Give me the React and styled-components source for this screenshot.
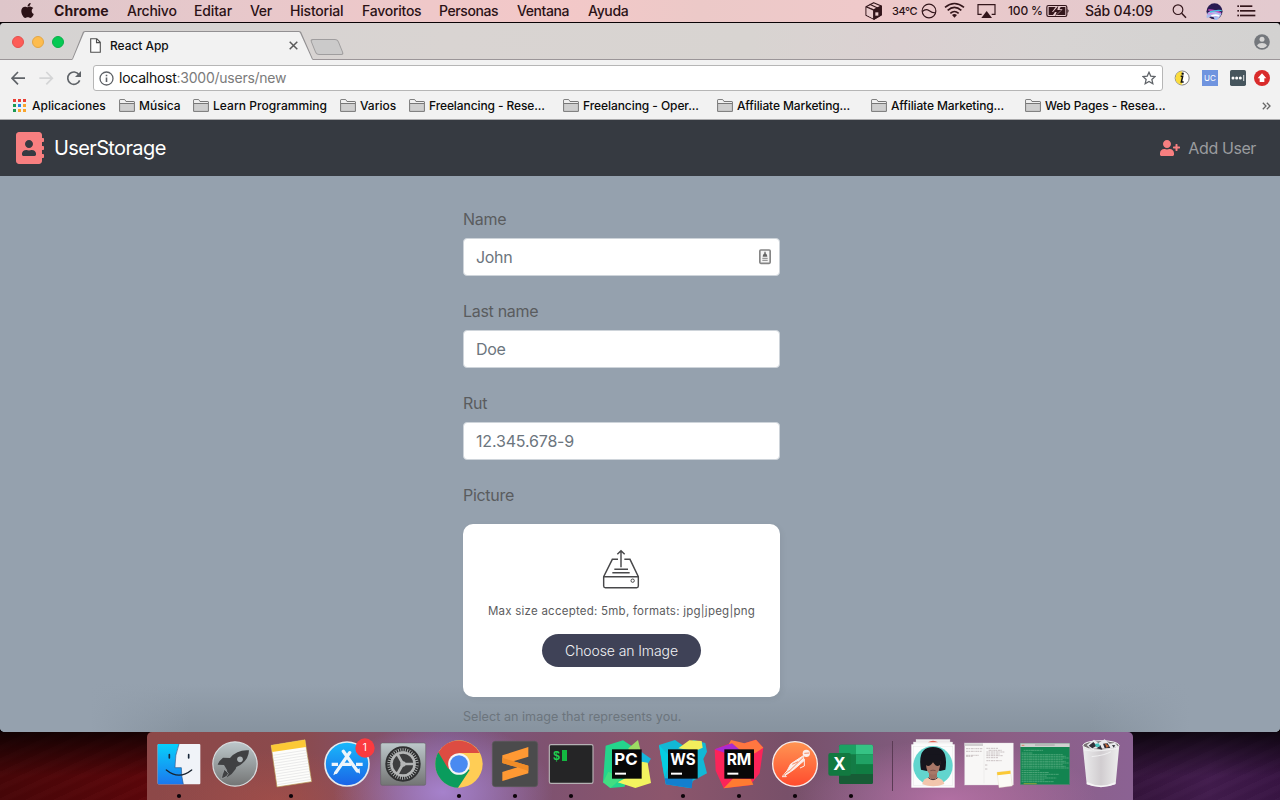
import React from "react";
import styled, { createGlobalStyle } from "styled-components";
import { FaAddressBook, FaUserPlus, FaApple } from "react-icons/fa";

const Global = createGlobalStyle`
  * { box-sizing: border-box; }
  html, body { margin: 0; padding: 0; background: #0a0205; overflow: hidden; }
  body { font-family: Inter, "Noto Sans", "Liberation Sans", sans-serif; }
  svg { display: block; flex: none; }
`;

const Screen = styled.div`
  width: 1280px;
  height: 800px;
  display: flex;
  flex-direction: column;
  background: #0a0205;
  overflow: hidden;
`;

/* ---------- menu bar ---------- */
const MenuBar = styled.header`
  height: 22px;
  flex: none;
  display: flex;
  align-items: center;
  padding-left: 19px;
  color: #2b1216;
  background: linear-gradient(90deg, #dec6ca 0, #e6c8cb 200px, #efc8c9 430px, #f3c8c8 560px, #ecc9c8 700px, #efc9ca 860px, #e6c9cc 1050px, #e3cacf 1280px);
`;
const AppleMark = styled.div`
  width: 35px;
  display: flex;
  padding-bottom: 2px;
`;
const MenuItem = styled.span`
  width: ${(p) => p.$w}px;
  flex: none;
  font-size: 14px;
  line-height: 22px;
  white-space: nowrap;
  font-weight: ${(p) => (p.$bold ? 700 : 450)};
  letter-spacing: ${(p) => p.$ls || 0}px;
`;
const Status = styled.div`
  display: flex;
  align-items: center;
  margin-left: auto;
  height: 22px;
`;
const StatusCell = styled.div`
  width: ${(p) => p.$w}px;
  flex: none;
  white-space: nowrap;
  font-size: ${(p) => p.$size || 12}px;
  letter-spacing: ${(p) => p.$ls || 0}px;
  line-height: 22px;
  font-weight: 450;
`;

/* ---------- browser window ---------- */
const Window = styled.main`
  height: 709px;
  margin-top: 1px;
  flex: none;
  display: flex;
  flex-direction: column;
  border-radius: 4px 4px 5px 5px;
  overflow: hidden;
  background: #95a1ae;
`;
const TabStrip = styled.div`
  height: 37px;
  flex: none;
  display: flex;
  align-items: flex-end;
  padding: 0 10px 0 12px;
  border-bottom: 1px solid #9b9598;
  background: linear-gradient(90deg, #d5d3d2 0, #d9d4d2 450px, #d8d4d1 750px, #dbd1d2 900px, #d7d4d3 1060px, #d3d2d1 1280px);
`;
const Lights = styled.div`
  display: flex;
  gap: 8px;
  align-self: center;
  width: 59px;
  padding-top: 2px;
`;
const Light = styled.i`
  width: 12px;
  height: 12px;
  flex: none;
  border-radius: 50%;
  background: ${(p) => p.$c};
  border: 1px solid ${(p) => p.$b};
`;
const Tab = styled.div`
  position: relative;
  width: 243px;
  height: 29px;
  margin-bottom: -1px;
  display: flex;
  align-items: center;
  padding: 0 16px 0 19px;
  font-size: 12px;
  color: #111;
  background: #929092;
  clip-path: polygon(0 100%, 1px 97%, 12px 3%, 14px 0, 228px 0, 230px 3%, 242px 97%, 100% 100%);
  &::before {
    content: "";
    position: absolute;
    inset: 1px 1px 0 1px;
    background: #f2f2f2;
    clip-path: polygon(0 100%, 1px 96%, 12px 3%, 13px 0, 227px 0, 228px 3%, 240px 97%, 100% 100%);
  }
  & > * { position: relative; }
`;
const TabTitle = styled.span`
  margin-left: 9px;
  flex: 1;
  letter-spacing: -0.05px;
  font-weight: 450;
`;
const NewTab = styled.i`
  width: 28px;
  height: 16px;
  margin: 0 0 4px -1px;
  background: #cbcaca;
  border: 1px solid #9f9d9e;
  border-radius: 3px;
  transform: skewX(22deg);
`;
const Profile = styled.div`
  margin-left: auto;
  align-self: center;
  padding-top: 2px;
`;
const Toolbar = styled.div`
  height: 36px;
  flex: none;
  display: flex;
  align-items: center;
  padding-left: 8px;
  background: #f2f2f2;
`;
const NavButtons = styled.div`
  display: flex;
  width: 85px;
`;
const UrlBar = styled.div`
  width: 1070px;
  height: 26px;
  display: flex;
  align-items: center;
  padding: 0 6px 0 5px;
  background: #fff;
  border: 1px solid #b6b6b6;
  border-radius: 3px;
  font-size: 14px;
  color: #7b7b7b;
  letter-spacing: -0.25px;
`;
const UrlText = styled.span`
  margin-left: 5px;
  padding-bottom: 1px;
  flex: 1;
  b { font-weight: 400; color: #111; }
`;
const Extensions = styled.div`
  display: flex;
  align-items: center;
  margin-left: 11px;
`;
const Bookmarks = styled.div`
  height: 24px;
  flex: none;
  display: flex;
  align-items: center;
  padding: 0 9px 4px 13px;
  background: #f2f2f2;
  border-bottom: 1px solid #ababad;
`;
const Bookmark = styled.div`
  width: ${(p) => p.$w}px;
  flex: none;
  display: flex;
  align-items: center;
  gap: ${(p) => p.$gap || 4}px;
  font-size: 12px;
  line-height: 16px;
  font-weight: 450;
  color: #0c0c0c;
  white-space: nowrap;
  letter-spacing: ${(p) => p.$ls || 0}px;
`;
const More = styled.div`
  margin-left: auto;
`;

/* ---------- page ---------- */
const Navbar = styled.nav`
  height: 56px;
  flex: none;
  display: flex;
  align-items: center;
  justify-content: space-between;
  padding: 0 24px 0 16px;
  background: #363a41;
`;
const Brand = styled.div`
  display: flex;
  align-items: center;
  gap: 10px;
  color: #fff;
  font-size: 20px;
  letter-spacing: -0.62px;
  svg { color: #f87f80; width: 28px; height: 32px; }
`;
const AddUser = styled.div`
  display: flex;
  align-items: center;
  gap: 8px;
  color: #9a9c9f;
  font-size: 16px;
  letter-spacing: -0.4px;
  svg { color: #f87f80; }
`;
const Page = styled.section`
  flex: 1;
  display: flex;
  flex-direction: column;
  align-items: flex-start;
  padding: 31px 0 0 463px;
  background:
    linear-gradient(90deg, #95a1ae 90px, transparent 190px, transparent 1090px, #95a1ae 1190px) bottom / 100% 48px no-repeat,
    linear-gradient(180deg, #95a1ae, #87939f) bottom / 100% 48px no-repeat,
    #95a1ae;
`;
const Field = styled.div`
  width: 317px;
  height: 92px;
  flex: none;
`;
const Label = styled.label`
  display: block;
  height: 31px;
  line-height: 25px;
  font-size: 16px;
  color: #5a5c5e;
  letter-spacing: -0.3px;
`;
const Input = styled.div`
  height: 38px;
  display: flex;
  align-items: center;
  justify-content: space-between;
  padding: 0 8px 0 12px;
  border: 1px solid #ced4da;
  border-radius: 4px;
  background: #fff;
  color: #6c757d;
  font-size: 16px;
  letter-spacing: ${(p) => p.$ls || -0.35}px;
`;
const Card = styled.div`
  width: 317px;
  height: 173px;
  margin-top: 10px;
  flex: none;
  display: flex;
  flex-direction: column;
  align-items: center;
  padding-top: 25px;
  border-radius: 10px;
  background: #fff;
  box-shadow: 2px 2px 6px rgba(0, 0, 0, 0.05);
`;
const UploadMark = styled.div`
  padding-right: 2px;
`;
const Hint = styled.p`
  margin: 14px 0;
  line-height: 17px;
  font-size: 11.5px;
  letter-spacing: 0.24px;
  color: #5c5c5e;
  white-space: nowrap;
`;
const Choose = styled.button`
  width: 159px;
  height: 33px;
  padding: 0;
  border: 0;
  border-radius: 17px;
  background: #3f4257;
  color: #f2f2f5;
  font: 300 14px Inter, sans-serif;
  letter-spacing: -0.1px;
`;
const Help = styled.small`
  margin-top: 10px;
  font-size: 12.6px;
  line-height: 19px;
  color: #6c757d;
  letter-spacing: 0.03px;
`;

/* ---------- dock ---------- */
const Desktop = styled.footer`
  height: 68px;
  flex: none;
  display: flex;
  justify-content: center;
  background:
    linear-gradient(180deg, rgba(0, 0, 0, 0.75), rgba(0, 0, 0, 0) 65%),
    repeating-linear-gradient(155deg, rgba(255, 255, 255, 0.012) 0 4px, rgba(0, 0, 0, 0.03) 7px 12px),
    linear-gradient(90deg, #480608 0, #5d060a 150px, #35143c 1130px, #421c4d 1210px, #391544 1280px);
`;
const Dock = styled.div`
  width: 986px;
  display: flex;
  padding: 0 4px;
  border-radius: 5px 5px 0 0;
  background:
    radial-gradient(ellipse 110px 70px at 296px 60px, rgba(168, 132, 208, 0.95), rgba(168, 132, 208, 0)),
    radial-gradient(ellipse 150px 60px at 800px 68px, rgba(196, 120, 178, 0.7), rgba(196, 120, 178, 0)),
    radial-gradient(ellipse 120px 50px at 130px 68px, rgba(170, 80, 72, 0.6), rgba(170, 80, 72, 0)),
    linear-gradient(90deg, #8d4848 0, #8b4a4d 150px, #7c5680 300px, #7f5270 400px, #8c566c 520px, #785069 640px, #7c5878 720px, #8c5e84 850px, #8b6293 986px);
`;
const Separator = styled.div`
  width: 26px;
  display: flex;
  align-items: center;
  justify-content: center;
  &::before {
    content: "";
    width: 1px;
    height: 50px;
    background: #5b3b55;
  }
`;

const ink = "#33161b";

const AppIcon = ({ off, running, children }) => (
  <svg width="56" height="68" viewBox={`${off} 21 168 204`}>
    {children}
    {running && <circle cx={off + 84} cy="213" r="6.3" fill="#0c0309" />}
  </svg>
);

const IdeTile = ({ x, name, w }) => (
  <g>
    <rect x={x} y="73" width="89" height="88" fill="#080808" />
    <text x={x + 7} y="120" fontSize="49" fontFamily="Inter" fontWeight="700" fill="#fff" textLength={w} lengthAdjust="spacingAndGlyphs">{name}</text>
    <rect x={x + 9} y="143" width="33" height="6" fill="#fff" />
  </g>
);

const Folder = () => (
  <svg width="16" height="13" viewBox="0 0 16 13">
    <path d="M.6 12.4V1.1q0-.5.5-.5h4.600l1.300 1.900h7.900q.5 0 .5.5v9.400z" fill="#cfcfcf" stroke="#777" />
    <path d="M1.100 1.100h4.300l1.300 1.900h8.200v1H1.100z" fill="#f0f0f0" />
    <path d="M1 4.500h14" stroke="#777" />
  </svg>
);

const AppsGrid = () => (
  <svg width="13" height="13" viewBox="0 0 13 13">
    {["#ea3f36", "#ea3f36", "#ea3f36", "#1c9a55", "#2385ea", "#f9a52d", "#1c9a55", "#f9a52d", "#f9a52d"].map((c, i) => (
      <rect key={i} x={(i % 3) * 5} y={Math.floor(i / 3) * 5} width="3" height="3" fill={c} />
    ))}
  </svg>
);

const menus = [
  ["Chrome", 73, true, 0.1],
  ["Archivo", 67, false, -0.25],
  ["Editar", 56, false, -0.15],
  ["Ver", 40, false, -0.3],
  ["Historial", 72, false, -0.2],
  ["Favoritos", 77, false, -0.25],
  ["Personas", 78, false, -0.4],
  ["Ventana", 71, false, -0.4],
  ["Ayuda", 60, false, -0.35],
];

const folders = [
  ["Música", 74, 0],
  ["Learn Programming", 147, 0.05],
  ["Varios", 69, 0],
  ["Freelancing - Rese...", 154, -0.1],
  ["Freelancing - Oper...", 154, -0.07],
  ["Affiliate Marketing...", 154, -0.13],
  ["Affiliate Marketing...", 154, -0.13],
  ["Web Pages - Resea...", 160, -0.1],
];

function MenuBarView() {
  return (
    <MenuBar>
      <AppleMark><FaApple size={17} color="#2b1216" /></AppleMark>
      {menus.map(([t, w, b, ls]) => <MenuItem key={t} $w={w} $bold={b} $ls={ls}>{t}</MenuItem>)}
      <Status>
        <StatusCell $w={27}>
          <svg width="17" height="18" viewBox="46 5 51 54">
            <path d="M72 7 95 17V44L73 57 49 45V19z" fill="none" stroke={ink} strokeWidth="3.500" strokeLinejoin="round" />
            <path d="M49 19 72 28 95 17V44L73 57V28" fill={ink} stroke={ink} strokeWidth="2" />
            <path d="M51 20 72 28V55L51 44z" fill="#e9cbcd" />
            <path d="M49 19 72 29 95 17M72 29V57M60 12 84 23" fill="none" stroke={ink} strokeWidth="3.500" />
            <rect x="77" y="36" width="9" height="10" fill="#e9cbcd" />
          </svg>
        </StatusCell>
        <StatusCell $w={29} $size={11} $ls={-0.4}>34°C</StatusCell>
        <StatusCell $w={23}>
          <svg width="16" height="16" viewBox="214 9 48 48">
            <circle cx="238" cy="33" r="20.500" fill="none" stroke={ink} strokeWidth="3.500" />
            <path d="M218 35C225 27 232 27 239 32S251 39 258 38" fill="none" stroke={ink} strokeWidth="3.500" />
          </svg>
        </StatusCell>
        <StatusCell $w={33}>
          <svg width="21" height="18" viewBox="285 7 63 54">
            <g fill="none" stroke={ink} strokeWidth="5">
              <path d="M288 23Q316 0 345 23" />
              <path d="M296 32Q316 14 337 32" />
              <path d="M304 41Q316 30 329 41" />
            </g>
            <path d="M309 46Q316 40 324 46L316.500 54z" fill={ink} />
          </svg>
        </StatusCell>
        <StatusCell $w={31}>
          <svg width="19" height="17" viewBox="382 8 57 51">
            <path d="M396 42H385V13H436V42H426" fill="none" stroke={ink} strokeWidth="3.500" />
            <path d="M411 32 427 53H395z" fill={ink} />
          </svg>
        </StatusCell>
        <StatusCell $w={38} $size={12} $ls={-0.15}>100 %</StatusCell>
        <StatusCell $w={39}>
          <svg width="24" height="14" viewBox="590 13 72 42">
            <rect x="592.500" y="17.500" width="60" height="33" rx="5" fill="none" stroke={ink} strokeWidth="3.500" />
            <path d="M598 22H619L608 37H617L611 46H598zM634 22H648V46H622L640 29H630z" fill={ink} />
            <path d="M627 18 611 37H622L617 50 636 31H624z" fill={ink} />
            <path d="M655 29Q660 33 655 39z" fill={ink} stroke={ink} />
          </svg>
        </StatusCell>
        <StatusCell $w={87} $size={14} $ls={-0.2}>Sáb 04:09</StatusCell>
        <StatusCell $w={34}>
          <svg width="16" height="17" viewBox="970 10 48 51">
            <circle cx="988" cy="30" r="14.500" fill="none" stroke={ink} strokeWidth="3.500" />
            <path d="M999 41 1012 54" stroke={ink} strokeWidth="4.500" />
          </svg>
        </StatusCell>
        <StatusCell $w={31}>
          <svg width="17" height="17" viewBox="1072 8 51 51">
            <circle cx="1097.500" cy="33" r="24" fill="#291b52" />
            <path d="M1077 37Q1088 28 1102 31T1118 38 1110 54 1097 55 1081 51 1077 37z" fill="#a9bdee" />
            <path d="M1079 29Q1095 28 1117 38" fill="none" stroke="#c94bc0" strokeWidth="4" />
            <path d="M1078 42Q1092 34 1104 49" fill="none" stroke="#d78be0" strokeWidth="4" />
            <path d="M1084 35Q1104 28 1119 31" stroke="#43c2dd" strokeWidth="4" fill="none" />
            <path d="M1088 47Q1100 42 1112 47" stroke="#fff" strokeWidth="5" fill="none" />
          </svg>
        </StatusCell>
        <StatusCell $w={43}>
          <svg width="19" height="14" viewBox="1166 12 57 42">
            <g fill={ink}>
              <rect x="1167" y="16" width="5" height="5" /><rect x="1175" y="16" width="37" height="5" />
              <rect x="1167" y="30" width="5" height="5" /><rect x="1175" y="30" width="46" height="5" />
              <rect x="1167" y="44" width="5" height="5" /><rect x="1175" y="44" width="46" height="5" />
            </g>
          </svg>
        </StatusCell>
      </Status>
    </MenuBar>
  );
}

function BrowserChrome() {
  return (
    <>
      <TabStrip>
        <Lights>
          <Light $c="#fd5c57" $b="#e5504d" />
          <Light $c="#fdbc4e" $b="#e3a644" />
          <Light $c="#05c953" $b="#0ab04a" />
        </Lights>
        <Tab>
          <svg width="11" height="15" viewBox="0 0 11 15">
            <path d="M.7.7H6.800L10.300 4.300V14.300H.7zM6.500.7V4.600H10.300" fill="#fdfdfd" stroke="#4e4e4e" strokeWidth="1.100" />
          </svg>
          <TabTitle>React App</TabTitle>
          <svg width="9" height="9" viewBox="0 0 9 9"><path d="M.7.7 8.300 8.300M8.300.7.700 8.300" stroke="#5a5a5a" strokeWidth="1.500" /></svg>
        </Tab>
        <NewTab />
        <Profile>
          <svg width="16" height="16" viewBox="0 0 16 16">
            <circle cx="8" cy="8" r="7.800" fill="#74777c" />
            <circle cx="8" cy="5.300" r="2.500" fill="#d6d5d4" />
            <path d="M3 11.200Q4.500 9 8 9T13 11.200Q11.500 14 8 14T3 11.200z" fill="#d6d5d4" />
          </svg>
        </Profile>
      </TabStrip>
      <Toolbar>
        <NavButtons>
          <svg width="84" height="18" viewBox="24 207 252 54">
            <path d="M75 234.500H37M54 216 36 234.500 54 253" fill="none" stroke="#5f6368" strokeWidth="5" />
            <path d="M118 234.500H156M139 216 157 234.500 139 253" fill="none" stroke="#d4d5d6" strokeWidth="5" />
            <path d="M237 224A18.500 18.500 0 1 0 239 241" fill="none" stroke="#5f6368" strokeWidth="5" />
            <path d="M243 213V231H225z" fill="#5f6368" />
          </svg>
        </NavButtons>
        <UrlBar>
          <svg width="15" height="15" viewBox="0 0 15 15">
            <circle cx="7.500" cy="7.500" r="6.500" fill="none" stroke="#5f6368" strokeWidth="1.300" />
            <path d="M7.500 6.600V11M7.500 3.800V5.300" stroke="#5f6368" strokeWidth="1.600" />
          </svg>
          <UrlText><b>localhost</b>:3000/users/new</UrlText>
          <svg width="14" height="14" viewBox="875 213 44 44">
            <path d="M897 217 902.500 229 916 230.500 906 239.500 909 253 897 246 885 253 888 239.500 878 230.500 891.500 229z" fill="none" stroke="#5f6368" strokeWidth="4" />
          </svg>
        </UrlBar>
        <Extensions>
          <svg width="98" height="18" viewBox="972 207 294 54">
            <circle cx="996.500" cy="234" r="21" fill="#fff" stroke="#666" strokeWidth="2.500" />
            <path d="M996.500 213.500A20.500 20.500 0 0 0 996.500 254.500z" fill="#fbdc3c" />
            <path d="M992 229H998L994 246H1001" fill="none" stroke="#111" strokeWidth="4.500" />
            <circle cx="998" cy="221" r="3.500" fill="#111" />
            <rect x="1056" y="210" width="48" height="48" fill="#6f94df" />
            <text x="1080" y="243" fontSize="24" fontFamily="Inter" textAnchor="middle" fill="#fff">UC</text>
            <rect x="1140" y="210" width="48" height="48" rx="5" fill="#46555d" />
            <g fill="#fff">
              <circle cx="1149" cy="234" r="4.500" /><circle cx="1160" cy="234" r="4.500" /><circle cx="1171" cy="234" r="4.500" />
              <rect x="1180" y="225" width="2.500" height="18" />
            </g>
            <circle cx="1236" cy="234" r="24" fill="#d92b2b" />
            <path d="M1236 220 1249 235H1243V246H1229V235H1223z" fill="#fff" />
          </svg>
        </Extensions>
      </Toolbar>
      <Bookmarks>
        <Bookmark $w={106} $gap={6}><AppsGrid />Aplicaciones</Bookmark>
        {folders.map(([t, w, ls], i) => <Bookmark key={i} $w={w} $ls={ls}><Folder />{t}</Bookmark>)}
        <More>
          <svg width="9" height="8" viewBox="0 0 9 8"><path d="M.8.8 4 4 .8 7.200M4.800.8 8 4 4.800 7.200" fill="none" stroke="#666" strokeWidth="1.300" /></svg>
        </More>
      </Bookmarks>
    </>
  );
}

function UserForm() {
  return (
    <Page>
      <Field><Label>Name</Label>
        <Input>John
          <svg width="12" height="16" viewBox="957 148 36 48">
            <rect x="959.500" y="151" width="31" height="40" rx="3" fill="#f4f4f4" stroke="#858585" strokeWidth="5" />
            <path d="M975 156V163" stroke="#888" strokeWidth="5" />
            <path d="M968 171Q969 161 975 161T982 171z" fill="#666" />
            <path d="M967 176H983M967 182H983" stroke="#999" strokeWidth="4" />
          </svg>
        </Input>
      </Field>
      <Field><Label>Last name</Label><Input>Doe</Input></Field>
      <Field><Label>Rut</Label><Input $ls={-0.17}>12.345.678-9</Input></Field>
      <Label>Picture</Label>
      <Card>
        <UploadMark>
          <svg width="38" height="40" viewBox="486 206 114 120">
            <g fill="none" stroke="#48484a" strokeWidth="4.300">
              <path d="M543 261V213M532 222 543 211 554 222" />
              <path d="M534 237H517L491 289V317Q491 322 496 322H590Q595 322 595 317V289L570 237H553" />
              <path d="M491 289H595M523 267H564M517 277H569" />
              <circle cx="578" cy="301" r="5" strokeWidth="3" />
            </g>
          </svg>
        </UploadMark>
        <Hint>Max size accepted: 5mb, formats: jpg|jpeg|png</Hint>
        <Choose>Choose an Image</Choose>
      </Card>
      <Help>Select an image that represents you.</Help>
    </Page>
  );
}

const lines = (n, f) => Array.from({ length: n }, (_, i) => f(i));

function DockView() {
  return (
    <Desktop>
      <Dock>
        <AppIcon off={33} running>
          <defs>
            <linearGradient id="fb" x2="0" y2="1"><stop stopColor="#07d0fb" /><stop offset="1" stopColor="#1b77ee" /></linearGradient>
            <linearGradient id="grey" x2="0" y2="1"><stop stopColor="#bdc8cb" /><stop offset="1" stopColor="#737474" /></linearGradient>
            <linearGradient id="as" x2="0" y2="1"><stop stopColor="#18b9fb" /><stop offset="1" stopColor="#1b62e6" /></linearGradient>
            <linearGradient id="pm" x2="0" y2="1"><stop stopColor="#ff9553" /><stop offset="1" stopColor="#ff4b2e" /></linearGradient>
            <linearGradient id="bin" x2="1" y2="0"><stop stopColor="#ececed" /><stop offset=".5" stopColor="#d1cdd0" /><stop offset="1" stopColor="#eeeeee" /></linearGradient>
          </defs>
          <rect x="53" y="57" width="128" height="121" rx="3" fill="#f0f3f8" />
          <path d="M56 57H117Q104 90 105 128H124Q124 155 130 178H56Q53 178 53 175V60Q53 57 56 57z" fill="url(#fb)" />
          <path d="M117 57Q104 90 105 128H124Q124 155 130 178" fill="none" stroke="#27568c" strokeWidth="2" />
          <path d="M88 89V99M146 89V99" stroke="#17273a" strokeWidth="5" strokeLinecap="round" />
          <path d="M79 135Q117 166 155 135" fill="none" stroke="#17222e" strokeWidth="4" strokeLinecap="round" />
        </AppIcon>
        <AppIcon off={201}>
          <circle cx="285" cy="117" r="66.500" fill="url(#grey)" stroke="#d8dcde" strokeWidth="3.500" />
          <path d="M327 76Q292 73 270 99L249 98Q238 106 233 119L252 120 261 135Q263 144 261 157 278 147 287 132L289 126Q326 110 327 76z" fill="#404143" />
          <circle cx="300" cy="103" r="8.500" fill="#aeb5b8" />
          <path d="M253 133 265 145Q262 157 244 161 246 150 253 133z" fill="#404143" stroke="#a3a8aa" strokeWidth="2" />
        </AppIcon>
        <AppIcon off={369} running>
          <path d="M393 61 495 44 515 170 411 186z" fill="#fdfdfb" stroke="#b3924d" strokeWidth="2" />
          <path d="M393 61 495 44 498 66 397 81z" fill="#fcc936" />
          {lines(12, (i) => <path key={i} d={`M${399 + i * 1.2} ${91 + i * 8} ${500 + i * 1.2} ${75 + i * 8}`} stroke="#d7d7d9" strokeWidth="1.500" />)}
        </AppIcon>
        <AppIcon off={537}>
          <circle cx="621" cy="117" r="66" fill="url(#as)" stroke="#e6eaee" strokeWidth="5" />
          <g stroke="#eef5fb" strokeWidth="10" strokeLinecap="round">
            <path d="M629 83 588 142M610 79 652 138" />
            <path d="M575 118H594M604 118H634M648 118H668" strokeLinecap="butt" />
          </g>
          <path d="M583 140 580 151 591 145zM647 137 660 146 659 130z" fill="#eef5fb" />
          <circle cx="675" cy="69" r="29" fill="#fb3b3f" />
          <text x="674" y="79" fontSize="30" fontFamily="Inter" textAnchor="middle" fill="#fff">1</text>
        </AppIcon>
        <AppIcon off={705}>
          <rect x="722" y="54" width="135" height="127" rx="5" fill="url(#grey)" stroke="#5f6060" strokeWidth="1.500" />
          <circle cx="789" cy="117" r="50" fill="#aeb1b1" stroke="#303132" strokeWidth="6" />
          <circle cx="789" cy="117" r="43" fill="none" stroke="#262728" strokeWidth="9" strokeDasharray="4 3" />
          <circle cx="789" cy="117" r="34" fill="#3d3e3f" stroke="#b4b6b6" strokeWidth="6" />
          <path d="M789 117H823M789 117 772 87M789 117 772 147" stroke="#b4b6b6" strokeWidth="8" />
          <circle cx="789" cy="117" r="8" fill="#b4b6b6" />
        </AppIcon>
        <AppIcon off={3} running>
          <circle cx="87" cy="117" r="71" fill="#ffcd55" />
          <path d="M87 117 25 82A71 71 0 0 0 84 188L119 135z" fill="#0a9c5d" />
          <path d="M25 82A71 71 0 0 1 149 84H87L55 132z" fill="#dd4c42" />
          <circle cx="87" cy="117" r="32.500" fill="#f4f5f5" />
          <circle cx="87" cy="117" r="26.500" fill="#4a8af1" />
        </AppIcon>
        <AppIcon off={171} running>
          <rect x="187" y="49" width="136" height="136" rx="9" fill="#4b4b4c" stroke="#5b5a5b" strokeWidth="2" />
          <path d="M217 91 295 66V95L250 109 295 122V145L217 168V141L262 127 217 114z" fill="#ff9933" />
          <path d="M250 109 217 98V114L262 127 295 138V122z" fill="#f08c27" />
        </AppIcon>
        <AppIcon off={339} running>
          <rect x="358" y="59" width="131" height="116" rx="5" fill="#252526" stroke="#b6b2b4" strokeWidth="3.500" />
          <text x="369" y="105" fontSize="36" fontFamily="Liberation Mono" fontWeight="700" fill="#1fd350">$</text>
          <rect x="396" y="75" width="15" height="33" fill="#13b841" />
        </AppIcon>
        <AppIcon off={507}>
          <path d="M527 62 579 46 606 64 584 185 541 189 519 172z" fill="#24d58c" />
          <path d="M595 70 624 45 632 78 600 83z" fill="#9cde63" />
          <path d="M623 73 663 101 645 130 620 115z" fill="#13b6dc" />
          <path d="M563 172 594 155 635 110 653 113 663 174 616 189z" fill="#f2f45f" />
          <path d="M519 172 541 189 575 160 535 140z" fill="#41dd82" />
          <IdeTile x={546} name="PC" w={70} />
        </AppIcon>
        <AppIcon off={675} running>
          <path d="M687 60 735 45 760 62 791 45 826 54 831 80 820 102 831 145 788 168 783 190 707 178z" fill="#12b8d5" />
          <path d="M745 70 778 46 815 48 818 68 795 78z" fill="#f2ee5c" />
          <path d="M704 160 788 160 785 190 708 178z" fill="#137fce" />
          <path d="M687 60 725 100 703 155z" fill="#05cde1" />
          <IdeTile x={714} name="WS" w={76} />
        </AppIcon>
        <AppIcon off={3} running>
          <path d="M14 73 57 56 104 55 138 44 160 68 149 145 120 181 41 190 17 137z" fill="#fb2459" />
          <path d="M57 56 63 45 103 55 138 44 160 68 135 85 77 76z" fill="#ff7740" />
          <path d="M14 73 66 55 91 76 43 83z" fill="#a92bd1" />
          <path d="M41 190 70 160 122 162 130 179z" fill="#ff7b32" />
          <IdeTile x={43} name="RM" w={74} />
        </AppIcon>
        <AppIcon off={171} running>
          <circle cx="255" cy="117" r="67" fill="url(#pm)" stroke="#f7eeee" strokeWidth="4" />
          <circle cx="289" cy="85" r="11" fill="#fbeeea" />
          <path d="M280 92 242 117 231 138 218 151 229 149 252 133 282 107z" fill="#fbeeea" stroke="#fbeeea" strokeWidth="3" />
          <path d="M280 97 237 139M264 110 247 118M218 151 238 137M283 85 298 84" stroke="#f57446" strokeWidth="2.500" fill="none" />
          <path d="M283 102V123L270 129M216 155H229L225 150" stroke="#fbeeea" strokeWidth="3" fill="none" />
        </AppIcon>
        <AppIcon off={339} running>
          <rect x="387" y="59" width="102" height="118" rx="5" fill="#137b45" />
          <path d="M392 59H438V88H387V64Q387 59 392 59z" fill="#1ca163" />
          <path d="M438 59H484Q489 59 489 64V88H438z" fill="#35c384" />
          <rect x="438" y="88" width="51" height="30" fill="#20a265" />
          <path d="M387 147H489V172Q489 177 484 177H392Q387 177 387 172z" fill="#175c36" />
          <rect x="438" y="118" width="51" height="29" fill="#107c42" />
          <rect x="355" y="84" width="68" height="68" rx="6" fill="#127940" />
          <text x="388" y="136" fontSize="50" fontFamily="Inter" fontWeight="700" fill="#fff" textAnchor="middle">X</text>
        </AppIcon>
        <Separator />
        <AppIcon off={585}>
          <rect x="618" y="43" width="102" height="20" fill="#f0eff0" stroke="#d3cbd0" />
          <rect x="610" y="51" width="118" height="20" fill="#f5f5f5" stroke="#d3cbd0" />
          <path d="M654 52Q669 43 684 52z" fill="#e36354" />
          <rect x="604" y="58" width="130" height="130" fill="#fcfcfc" />
          <rect x="609.500" y="63.500" width="119" height="118" fill="none" stroke="#dcdcdc" />
          <circle cx="669" cy="122" r="59" fill="#62d5ce" />
          <path d="M637 178Q639 159 657 158H682Q699 160 703 177 671 190 637 178z" fill="#f2c6ac" />
          <path d="M657 139H681V157L669 166 657 157z" fill="#9d6e60" />
          <path d="M633 134Q621 66 669 66T706 134L690 138 669 130 650 138z" fill="#16151d" />
          <path d="M649 106H690Q692 133 681 145 669 153 657 145 646 133 649 106z" fill="#a87767" />
          <path d="M643 91Q669 84 695 91V108H643z" fill="#16151d" />
          <path d="M648 108H690V120Q680 127 673 117L669 112 665 117Q656 127 648 120z" fill="#17161b" />
          <path d="M661 137Q669 134 677 137" stroke="#653e3c" strokeWidth="2" fill="none" />
          <path d="M655 158Q669 170 683 158" stroke="#493338" strokeWidth="3" fill="none" />
        </AppIcon>
        <AppIcon off={-57}>
          <rect x="-46" y="54" width="146" height="126" fill="#f8f7f6" stroke="#dcd5da" />
          <rect x="-46" y="55" width="55" height="8" fill="#d0cecf" />
          <path d="M12 63V175" stroke="#ddd" />
          <g stroke="#b4a9aa" strokeWidth="2" strokeDasharray="7 1 4 2">
            <path d="M-42 71H7M-42 79H5M-42 91H-4M-42 94H-22M19 70H54M26 76H65M19 81H74M19 87H61M19 92H68M19 98H55M19 107H65M15 120H22M15 132H22" />
          </g>
          <path d="M51 142 91 137 97 183 57 188z" fill="#fbfaf5" stroke="#d3ccb5" />
          <path d="M51 142 91 137 92 146 52 151z" fill="#fbc935" />
        </AppIcon>
        <AppIcon off={111}>
          <rect x="121" y="55" width="148" height="124" fill="#138450" stroke="#7a8c84" />
          <rect x="121" y="55" width="148" height="11" fill="#cfd0cf" />
          <path d="M125 61H133" stroke="#d68568" strokeWidth="3" />
          <path d="M165 60H224" stroke="#898b8a" strokeWidth="2" />
          <g stroke="#65b389" strokeWidth="2" strokeDasharray="5 1 9 1">
            <path d="M131 76H189M125 84H158" />
            {lines(9, (i) => <path key={i} d={`M125 ${89 + i * 5}H${248 + (i % 3) * 9}`} />)}
            {lines(7, (i) => <path key={i} d={`M125 ${137 + i * 5.5}H${178 + (i * 29) % 65}`} />)}
          </g>
          <path d="M131 176H170" stroke="#c8b72f" strokeWidth="2" />
        </AppIcon>
        <AppIcon off={279}>
          <path d="M308 60Q363 43 418 60L407 177Q363 195 320 177z" fill="url(#bin)" />
          <ellipse cx="363" cy="61" rx="54" ry="14" fill="#777073" stroke="#f5f5f5" strokeWidth="3" />
          <path d="M320 60 342 44 355 54 374 43 389 56 405 53 415 65 387 73 361 70 333 72z" fill="#e9e9ec" />
          <path d="M326 62 340 51 350 62 337 70zM369 56 383 55 391 69 374 70zM396 60 406 61 401 68zM350 70 361 60 367 74z" fill="#313039" />
          <path d="M344 57 356 55 361 64 349 67z" fill="#45c3bd" />
          <path d="M374 54 387 63 380 69z" fill="#c66a3a" />
          <path d="M312 75Q340 80 360 77T414 70M335 95Q375 91 393 80" fill="none" stroke="#f3f3f4" strokeWidth="2.500" />
          <path d="M321 171Q363 192 406 171L406 178Q363 195 320 178z" fill="#f5f4f5" />
        </AppIcon>
      </Dock>
    </Desktop>
  );
}

export default function App() {
  return (
    <Screen>
      <Global />
      <MenuBarView />
      <Window>
        <BrowserChrome />
        <Navbar>
          <Brand><FaAddressBook />UserStorage</Brand>
          <AddUser><FaUserPlus size={20} />Add User</AddUser>
        </Navbar>
        <UserForm />
      </Window>
      <DockView />
    </Screen>
  );
}
